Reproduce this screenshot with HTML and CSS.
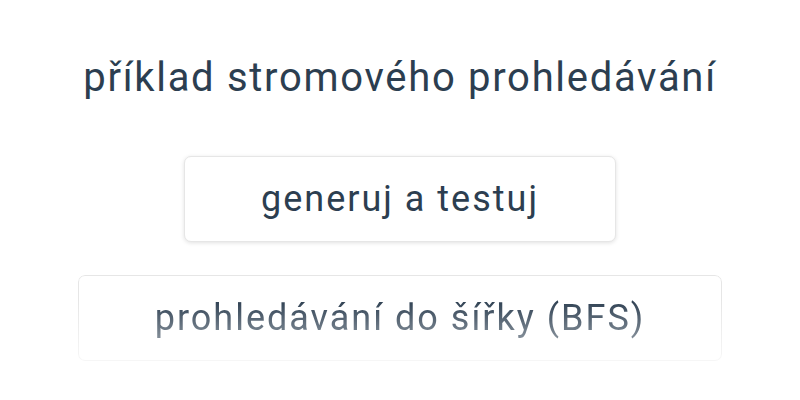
FILE: index.html
```html
<!DOCTYPE html>
<html lang="cs">
<head>
  <meta charset="UTF-8" />
  <meta name="viewport" content="width=device-width, initial-scale=1.0"/>
  <title>Stromové prohledávání</title>
  <link rel="stylesheet" href="styles.css">
</head>
<body>
  <div class="panel">
    <h1 class="title">příklad stromového prohledávání</h1>
    <div class="actions">
      <button class="action">generuj a testuj</button>
      <button class="action faded">prohledávání do šířky (BFS)</button>
    </div>
  </div>
</body>
</html>
```

FILE: styles.css
```css
body {
  margin: 0;
  background-color: #fff;
  font-family: Roboto, "Liberation Sans", sans-serif;
  color: #2c3e50;
}
.panel {
  display: flex;
  flex-direction: column;
  align-items: center;
  padding-top: 52px;
}
.title {
  margin: 0;
  font-size: 40px;
  font-weight: 400;
  letter-spacing: 1.7px;
  line-height: 52px;
}
.actions {
  display: flex;
  flex-direction: column;
  align-items: center;
  gap: 33px;
  margin-top: 52px;
}
.action {
  font-family: inherit;
  font-size: 36px;
  letter-spacing: 2px;
  color: #2c3e50;
  background-color: #fff;
  border: 1px solid #e6e6e6;
  border-radius: 7px;
  padding: 0 76px;
  height: 86px;
  box-shadow: 0 1px 4px rgba(0,0,0,0.12);
  cursor: pointer;
}
/* bottom item fades out, like a list that scrolls on */
.faded {
  -webkit-mask-image: linear-gradient(to bottom, #000 28%, rgba(0,0,0,0.35) 100%);
  mask-image: linear-gradient(to bottom, #000 28%, rgba(0,0,0,0.35) 100%);
}
```
